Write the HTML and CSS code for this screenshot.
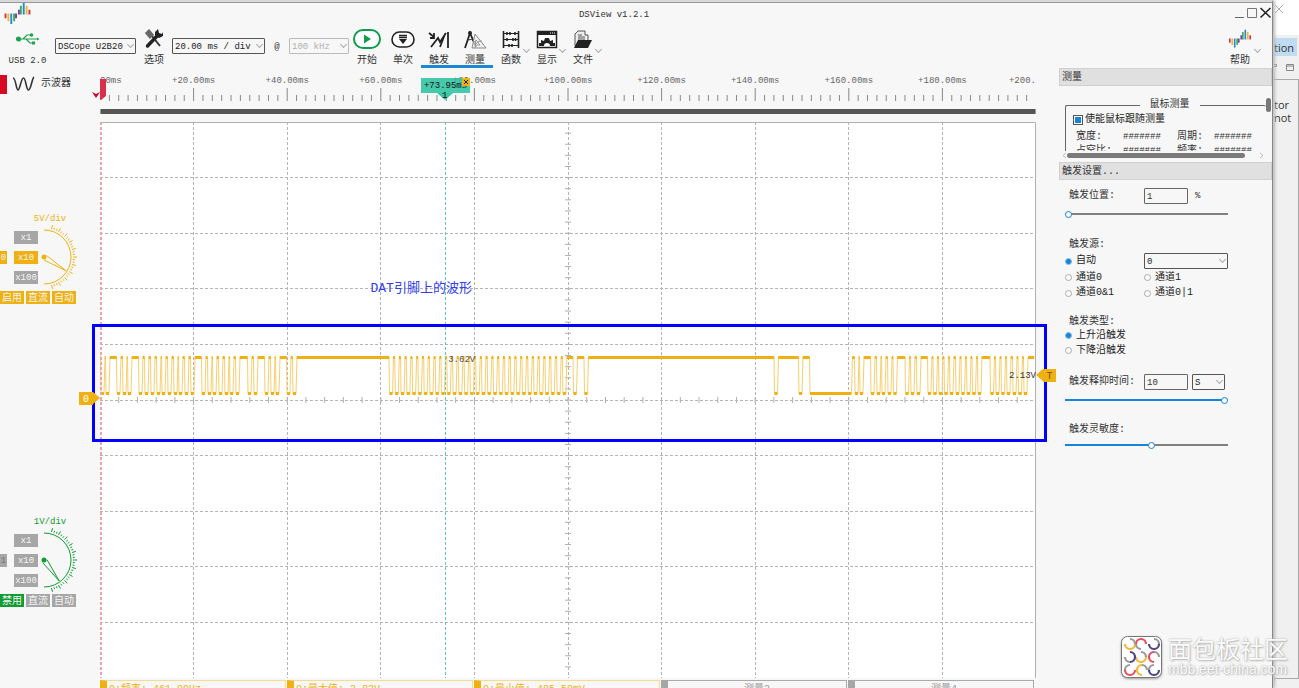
FILE: index.html
```html
<!DOCTYPE html>
<html lang="zh-CN">
<head>
<meta charset="utf-8">
<title>DSView v1.2.1</title>
<link rel="stylesheet" href="styles.css">
</head>
<body>
<svg class="defs" aria-hidden="true">
  <symbol id="bars" viewBox="0 0 27 23">
    <path fill="#d6304a" d="M0 11h2v5h-2zM25 7h2v5h-2z"/>
    <path fill="#f2b632" d="M3 11h2v8h-2zM22 3h2v9h-2z"/>
    <path fill="#2389dc" d="M6 11h2v11h-2zM19 0h2v12h-2z"/>
    <path fill="#3faa55" d="M9 11h2v8h-2zM16 3h2v9h-2z"/>
    <path fill="#7a3fa0" d="M11 11h2v5h-2zM14 7h2v5h-2z"/>
  </symbol>
</svg>
<div class="desktop">
  <div class="app">
    <header class="titlebar">
      <svg class="logo" width="27" height="22"><use href="#bars"/></svg>
      <h1>DSView v1.2.1</h1>
      <div class="window-buttons">
        <button aria-label="最小化"><svg width="11" height="13"><path d="M1 11.5h9" stroke="#666"/></svg></button>
        <button aria-label="最大化"><svg width="12" height="13"><path d="M1.500 2.500h9v9h-9z" fill="none" stroke="#777"/></svg></button>
        <button aria-label="关闭"><svg width="13" height="13"><path d="M1.500 2l10 9.500M11.500 2l-10 9.500" stroke="#222" stroke-width="1.600"/></svg></button>
      </div>
    </header>

    <nav class="toolbar">
      <button class="tool usb">
        <svg width="24" height="22" fill="none" stroke="#1aa34f" stroke-width="1.200"><circle cx="2.500" cy="11" r="2" fill="#1aa34f"/><path d="M3 11h18M7 11l4-4h4M10 11l4 4h3"/><circle cx="15.500" cy="7" r="1.200" fill="#1aa34f"/><path d="M16 13.500h3v3h-3zM21 9.500l2.500 1.500-2.500 1.500z" fill="#1aa34f" stroke="none"/></svg>
        <span class="latin">USB 2.0</span>
      </button>
      <span class="combo combo-device"><select aria-label="设备"><option>DSCope U2B20</option></select></span>
      <button class="tool">
        <svg width="20" height="22"><path d="M4 3l12 15" stroke="#333" stroke-width="2"/><path d="M2 4l5 6M4 2l5 6" stroke="#666" stroke-width="3"/><path d="M3.500 18L14 7" stroke="#222" stroke-width="3.500" stroke-linecap="round"/><path d="M11 8V4l3-3 1 4 3 1 1-2v4l-4 2z" fill="#222"/></svg>
        <span>选项</span>
      </button>
      <span class="combo combo-time"><select aria-label="时基"><option>20.00 ms / div</option></select></span>
      <span class="at latin">@</span>
      <span class="combo combo-rate off"><select aria-label="采样率" disabled><option>100 kHz</option></select></span>
      <button class="tool">
        <svg width="28" height="22"><rect x="1" y="2" width="26" height="18" rx="9" fill="#fff" stroke="#109c4c" stroke-width="2"/><path d="M11 6.500v9l7-4.500z" fill="#109c4c"/></svg>
        <span>开始</span>
      </button>
      <button class="tool">
        <svg width="24" height="22"><rect x="1" y="4" width="22" height="15" rx="7.500" fill="#fff" stroke="#222" stroke-width="1.600"/><path d="M8 7.500h8M8 9.500h8" stroke="#222" stroke-width="1.500"/><path d="M8 11h8l-4 5z" fill="#222"/></svg>
        <span>单次</span>
      </button>
      <button class="tool active">
        <svg width="22" height="22"><path d="M1 5l5 4M6 5v5H2M20 4v16" fill="none" stroke="#222" stroke-width="1.800"/><path d="M3 19L10 10l2 4 6-9M12 19l5-13" fill="none" stroke="#222" stroke-width="1.800"/></svg>
        <span>触发</span>
      </button>
      <button class="tool active">
        <svg width="24" height="22"><path d="M2 20L7 5l6 14" fill="none" stroke="#222" stroke-width="1.800"/><circle cx="7" cy="5" r="2" fill="#222"/><path d="M4 12q5-2 8 2" fill="none" stroke="#333"/><path d="M9 20L12 6l11 14z" fill="#eee" fill-opacity=".7" stroke="#888"/><path d="M12 17l1-5 4 5zM12 20q0-7 7-7" fill="none" stroke="#999"/></svg>
        <span>测量</span>
      </button>
      <button class="tool menu">
        <svg width="20" height="22" stroke="#222" fill="none"><path d="M2.500 3v17M17.500 3v17" stroke-width="1.600"/><path d="M3 5.500h14M3 11.500h14M3 17.500h14"/><path d="M6 4v3M9 4v3M12 10v3M14.500 10v3M6 10v3M8 16v3M11 16v3M14 4v3" stroke-width="1.600"/></svg>
        <span>函数</span>
      </button>
      <button class="tool menu">
        <svg width="22" height="22"><path d="M1.500 3.500h19v16h-19z" fill="#fff" stroke="#222" stroke-width="1.500"/><path d="M1 3h20v4H1z" fill="#222"/><path d="M14 5h1M16 5h1M18 5h1" stroke="#fff"/><path d="M3 18v-3h2l0-3 3 1 1-3h4l1 3 3-1v3h2v3h-5q0-3-3-3t-3 3z" fill="#222"/></svg>
        <span>显示</span>
      </button>
      <button class="tool menu">
        <svg width="22" height="22"><path d="M3 18V6l3-3h7v4h3v5" fill="#eee" stroke="#555"/><path d="M6 7h4M6 9h7M6 11h7" stroke="#555"/><path d="M2 20l4-8h14l-4 8z" fill="#222"/></svg>
        <span>文件</span>
      </button>
      <span class="spacer"></span>
      <button class="tool menu help">
        <svg width="22" height="22"><use href="#bars"/></svg>
        <span>帮助</span>
      </button>
    </nav>

    <main class="work">
      <aside class="gutter">
        <div class="mode"><i class="mode-tag"></i>
          <svg width="24" height="16"><path d="M1 2C4 2 4 14 6 14S9 2 11.500 2 14 14 16.500 14 20 2 22 1" fill="none" stroke="#333" stroke-width="1.600"/></svg>
          <span>示波器</span>
        </div>
        <section class="channel ch0">
          <h2>5V/div</h2>
          <div class="probe">
            <span class="tag">0</span>
            <div class="factors"><button>x1</button><button class="on">x10</button><button>x100</button></div>
            <svg class="dial" width="36" height="64" data-angle="32"></svg>
          </div>
          <div class="switches"><button class="on">启用</button><button class="on">直流</button><button class="on">自动</button></div>
        </section>
        <section class="channel ch1">
          <h2>1V/div</h2>
          <div class="probe">
            <span class="tag">1</span>
            <div class="factors"><button>x1</button><button>x10</button><button>x100</button></div>
            <svg class="dial" width="36" height="64" data-angle="54"></svg>
          </div>
          <div class="switches"><button class="on">禁用</button><button>直流</button><button>自动</button></div>
        </section>
      </aside>

      <section class="scope">
        <div class="ruler">
          <div class="ruler-labels latin"><span>00ms</span><span>+20.00ms</span><span>+40.00ms</span><span>+60.00ms</span><span>+80.00ms</span><span>+100.00ms</span><span>+120.00ms</span><span>+140.00ms</span><span>+160.00ms</span><span>+180.00ms</span><span>+200.</span></div>
          <svg class="ruler-ticks" id="ticks" viewBox="0 0 936 14" preserveAspectRatio="none"></svg>
          <div class="overview"></div>
          <svg class="origin" width="15" height="24"><path d="M8 3h6v17l-5 4h-1z" fill="#d6304a"/><path d="M0 16l4 2 4-2-4 6z" fill="#d6001c"/></svg>
          <div class="cursor latin"><span>+73.95ms</span><button class="cursor-close" aria-label="删除光标"><svg width="8" height="8"><path d="M2 2l4 4M6 2l-4 4" stroke="#222"/></svg></button><b>1</b></div>
        </div>
        <div class="plot">
          <svg class="trace" id="trace" viewBox="0 0 936 556" preserveAspectRatio="none"></svg>
          <p class="note">DAT引脚上的波形</p>
          <div class="highlight"></div>
          <span class="reading latin">3.62V</span>
          <span class="level latin">2.13V</span>
          <span class="flag zero">0</span>
          <span class="flag trig">T</span>
        </div>
        <div class="measures">
          <div class="live">0:频率: 461.00Hz</div><div class="live">0:最大值: 3.82V</div><div class="live">0:最小值: 485.50mV</div><div>测量3</div><div>测量4</div>
        </div>
      </section>

      <aside class="docks">
        <section>
          <h2 class="dock-title">测量</h2>
          <div class="dock-scroll">
            <fieldset class="mouse">
              <legend>鼠标测量</legend>
              <label class="check"><input type="checkbox" checked>使能鼠标跟随测量</label>
              <dl><dt>宽度:</dt><dd>#######</dd><dt>周期:</dt><dd>#######</dd><dt>占空比:</dt><dd>#######</dd><dt>频率:</dt><dd>#######</dd></dl>
            </fieldset>
            <div class="vbar"><i></i></div>
          </div>
          <div class="hbar">
            <svg width="5" height="7"><path d="M4 1L1 3.500 4 6" fill="none" stroke="#bbb"/></svg>
            <i></i>
            <svg width="5" height="7"><path d="M1 1l3 2.500L1 6" fill="none" stroke="#bbb"/></svg>
          </div>
        </section>
        <section>
          <h2 class="dock-title">触发设置...</h2>
          <form class="trigger">
            <div class="row"><label for="pos">触发位置:</label><input class="field" id="pos" value="1"><span class="latin">%</span></div>
            <input class="slider" type="range" aria-label="触发位置" min="0" max="100" value="0" style="--fill:0%">
            <h3 class="source-title">触发源:</h3>
            <div class="sources">
              <label class="pick"><input type="radio" name="src" checked>自动</label>
              <span class="combo combo-source"><select aria-label="通道"><option>0</option></select></span>
              <label class="pick"><input type="radio" name="src">通道0</label>
              <label class="pick"><input type="radio" name="src">通道1</label>
              <label class="pick"><input type="radio" name="src">通道0&amp;1</label>
              <label class="pick"><input type="radio" name="src">通道0|1</label>
            </div>
            <h3 class="type-title">触发类型:</h3>
            <label class="pick"><input type="radio" name="edge" checked>上升沿触发</label>
            <label class="pick"><input type="radio" name="edge">下降沿触发</label>
            <div class="row holdoff"><label for="hold">触发释抑时间:</label><input class="field" id="hold" value="10"><span class="combo combo-unit"><select aria-label="单位"><option>S</option></select></span></div>
            <input class="slider" type="range" aria-label="触发释抑时间" min="0" max="100" value="100" style="--fill:100%">
            <h3 class="sense-title"><label for="sense">触发灵敏度:</label></h3>
            <input class="slider" id="sense" type="range" min="0" max="100" value="53" style="--fill:53%">
          </form>
        </section>
      </aside>
    </main>
  </div>

  <div class="behind">
    <div class="behind-top"><svg width="10" height="10"><path d="M1 1l8 8M9 1l-8 8" stroke="#aaa"/></svg></div>
    <div class="behind-tab">tion</div>
    <div class="behind-tools"><svg width="25" height="10" fill="none" stroke="#888"><path d="M0 2.500h2.500v2H0M12.500 2.500h7v6h-7zM12 4h8"/></svg></div>
    <div class="behind-page"><span>tor</span><span>not</span></div>
  </div>

  <div class="watermark">
    <svg width="41" height="42" viewBox="0 0 41 42" fill="none" stroke-width="2.200"><rect x=".5" y=".5" width="40" height="41" rx="6" fill="#fff" stroke="#777" stroke-width="1"/>
      <path stroke="#f5b731" d="M4 8a5 5 0 0 0 10 0M15 21a5 5 0 0 0 10 0M21 29a5 5 0 0 0 0 10"/>
      <path stroke="#e84a5f" d="M15 8a5 5 0 0 1 10 0M33 16a5 5 0 0 0 0 10M4 34a5 5 0 0 0 10 0"/>
      <path stroke="#4a4585" d="M28 8a5 5 0 0 0 10 0M9 16a5 5 0 0 1 0 10M28 34a5 5 0 0 0 10 0"/>
      <path stroke="#999" d="M9 3a5 5 0 0 1 5 5M33 3a5 5 0 0 1 5 5M15 8a5 5 0 0 0 5 5M9 26a5 5 0 0 1-5-5M20 16a5 5 0 0 1 5 5M33 16a5 5 0 0 1 5 5M9 29a5 5 0 0 0-5 5M21 29a5 5 0 0 1 5 5M28 34a5 5 0 0 1 5-5"/></svg>
    <div><strong>面包板社区</strong><span>mbb.eet-china.com</span></div>
  </div>
</div>
<script src="app.js"></script>
</body>
</html>
```

FILE: styles.css
```css
* { box-sizing: border-box; }
body, h1, h2, h3, p, dl, dd, fieldset { margin: 0; }
body {
  overflow: hidden;
  color: #333;
  font: 10px/14px "Liberation Mono", "Noto Sans CJK SC", monospace;
}
button, input, select { margin: 0; padding: 0; border: 0; background: none; color: inherit; font: inherit; }
h1, h2, h3 { font-size: 10px; font-weight: 400; }
svg { display: block; flex: none; }
.defs { position: absolute; width: 0; height: 0; }
.latin { font-size: 9px; }
.desktop { position: relative; display: flex; height: 100vh; background: #f0f0f0; }
.app {
  position: relative;
  z-index: 1;
  flex: 1;
  min-width: 0;
  display: flex;
  flex-direction: column;
  border-top: 2px solid #d8d8d8;
  border-right: 1px solid #888;
  background: #f7f7f7;
  box-shadow: 2px 0 3px #bbb;
}
.titlebar {
  display: grid;
  grid-template-columns: 1fr auto 1fr;
  align-items: start;
  height: 26px;
  padding-left: 4px;
  border-top: 1px solid #999;
}
.titlebar h1 { margin-right: 48px; padding-top: 5px; font-size: 9px; }
.window-buttons { display: flex; justify-content: flex-end; gap: 1px; padding-top: 3px; }

.toolbar { display: flex; align-items: flex-start; height: 40px; }
.tool {
  display: flex;
  flex-direction: column;
  align-items: center;
  justify-content: flex-start;
  position: relative;
  width: 36px;
  height: 40px;
}
.tool span { margin-top: 2px; line-height: 16px; padding-top: 1px; height: 16px; }
.tool.active { box-shadow: inset 0 -3px #1b87d6; }
.tool.usb { width: 55px; }
.tool.menu::after {
  content: "";
  position: absolute;
  right: 0;
  top: 19px;
  width: 4px;
  height: 4px;
  border: solid #aaa;
  border-width: 0 1px 1px 0;
  transform: rotate(45deg);
}
.tool.help { width: 40px; margin-right: 12px; }
.spacer { flex: 1; }
.at { width: 24px; padding-top: 12px; text-align: center; }
.combo { position: relative; display: block; height: 16px; }
.toolbar .combo { margin-top: 10px; }
.combo select {
  width: 100%;
  height: 16px;
  padding: 1px 2px 0;
  appearance: none;
  border: 1px solid #555;
  border-radius: 1px;
  color: #222;
  font-size: 9px;
}
.combo::after {
  content: "";
  position: absolute;
  right: 3px;
  top: 4px;
  width: 4px;
  height: 4px;
  border: solid #aaa;
  border-width: 0 1px 1px 0;
  transform: rotate(45deg);
}
.combo.off select { border-color: #bbb; color: #b0b0b0; opacity: 1; }
.combo-device { width: 81px; }
.combo-time { width: 93px; }
.combo-rate { width: 60px; }

.work { flex: 1; min-height: 0; display: flex; }
.gutter { width: 100px; flex: none; }
.mode { display: flex; align-items: center; gap: 5px; height: 32px; }
.mode-tag { width: 7px; height: 19px; background: #d60a25; }
.channel { --hue: #efb111; margin-top: 112px; }
.channel + .channel { margin-top: 211px; }
.ch1 { --hue: #109c30; }
.channel h2 { width: 100px; color: var(--hue); text-align: center; font-size: 9px; line-height: 14px; height: 12px; }
.probe { display: flex; align-items: center; height: 66px; }
.channel button, .tag { height: 13px; background: #a6a6a6; color: #f4f4f4; font-size: 9px; line-height: 15px; text-align: center; }
.tag { width: 7px; margin-right: 7px; }
.ch0 .tag { background: var(--hue); }
.ch1 .tag { color: #777; }
.factors { display: flex; flex-direction: column; gap: 7px; width: 24px; }
.channel button.on { background: var(--hue); }
.dial { margin-left: 2px; overflow: visible; }
.switches { display: flex; gap: 2px; padding-top: 1px; }
.channel .switches button { width: 24px; font-size: 10px; }

.scope { flex: 1; min-width: 0; display: flex; flex-direction: column; margin-right: 23px; }
.ruler { position: relative; height: 54px; color: #666; }
.ruler-labels { display: grid; grid-template-columns: 1fr repeat(9, 2fr) 1fr; height: 20px; padding-top: 6px; text-align: center; }
.ruler-labels span:first-child { text-align: left; }
.ruler-labels span:last-child { text-align: right; }
.ruler-ticks { width: 100%; height: 14px; }
.overview { height: 5px; margin-top: 7px; background: #555; box-shadow: inset 1px 0 #999, inset -1px 0 #999; }
.origin { position: absolute; left: -8px; top: 8px; }
.cursor {
  position: absolute;
  left: 34.300%;
  top: 10px;
  width: 49px;
  height: 15px;
  background: rgba(40, 193, 158, .85);
  color: #111;
  line-height: 17px;
  text-align: center;
}
.cursor::after {
  content: "";
  position: absolute;
  left: 16px;
  top: 15px;
  border: solid transparent;
  border-width: 7px 8px 0;
  border-top-color: #3cc4a5;
}
.cursor b { position: absolute; z-index: 1; left: 21px; top: 10px; font-weight: 400; }
.cursor-close { position: absolute; right: 0; top: 0; width: 8px; height: 8px; background: #efb111; }

.plot { position: relative; flex: 1; min-height: 0; }
.trace { width: 100%; height: 100%; background: #fff; }
.trace path, .ruler-ticks path { fill: none; vector-effect: non-scaling-stroke; }
.grid { stroke: #b4b4b4; stroke-dasharray: 3 2; }
.frame, .grid-ticks { stroke: #b0b0b0; }
.start { stroke: #eba3ad; stroke-width: 2; stroke-dasharray: 3 2; }
.cursor-line { stroke: #5cc9b0; stroke-dasharray: 3 2; }
.edges { stroke: #f6cf70; }
.steady { stroke: #efb111; stroke-width: 3; }
.tick { stroke: #888; }
.note { position: absolute; left: 28.900%; top: 28.500%; color: #3040f0; font-size: 13px; line-height: 17px; white-space: nowrap; }
.highlight { position: absolute; left: -8px; right: -11px; top: 36.300%; height: 21.200%; border: 3px solid #00f; }
.reading { position: absolute; left: 37.200%; top: 41.500%; color: #555; }
.level { position: absolute; right: 0; top: 44.500%; }
.flag { position: absolute; height: 13px; background: #efb111; line-height: 15px; text-align: center; }
.flag::after { content: ""; position: absolute; top: 0; border: solid transparent; }
.zero { left: -21px; top: 48.600%; width: 14px; color: #fff; }
.zero::after { left: 14px; border-width: 6px 0 6px 7px; border-left-color: #efb111; }
.trig { right: -20px; top: 44.400%; width: 13px; color: #7a4d00; }
.trig::after { right: 13px; border-width: 6px 7px 6px 0; border-right-color: #efb111; }
.measures { display: grid; grid-template-columns: repeat(5, 1fr); gap: 1px; height: 10px; padding: 2px 2px 0 0; overflow: hidden; }
.measures div { height: 20px; padding-top: 2px; border: 1px solid #aaa; border-left: 7px solid #a6a6a6; color: #999; text-align: center; }
.measures .live { border-color: #f6dc8e; border-left-color: #efb111; color: #efb111; padding-left: 2px; text-align: left; }

.docks { flex: none; width: 213px; }
.dock-title { height: 18px; padding-left: 2px; border: 1px solid #d0d0d0; background: #e0e0e0; line-height: 18px; }
.dock-scroll { display: flex; height: 65px; padding: 12px 0 0 6px; overflow: hidden; }
.mouse { flex: 1; min-width: 0; height: 90px; padding: 0 0 0 7px; border: 1px solid #666; border-right: 0; border-radius: 2px; }
.mouse legend { margin: 0 auto; padding: 0 10px; white-space: nowrap; }
.check, .pick { display: flex; align-items: center; color: #222; }
.check { gap: 2px; height: 15px; }
.check input { width: 10px; height: 10px; appearance: none; border: 1px solid #555; background: #1685d8; box-shadow: inset 0 0 0 1px #fff; }
.mouse dl { display: grid; grid-template-columns: 47px 54px 37px 40px; padding: 3px 0 0 3px; }
.mouse dd { font-size: 9px; }
.vbar { flex: none; width: 6px; }
.vbar i { display: block; width: 5px; height: 14px; border-radius: 3px; background: #777; }
.hbar { display: flex; align-items: center; gap: 0; height: 11px; padding: 0 8px 2px 3px; }
.hbar i { width: 178px; height: 5px; margin-right: auto; border-radius: 3px; background: #7a7a7a; }
.trigger { padding: 7px 44px 0 6px; }
.row { display: grid; grid-template-columns: 75px 44px auto 1fr; align-items: center; height: 18px; padding-left: 4px; }
.row .latin { padding-left: 7px; }
.field { width: 44px; height: 16px; padding: 1px 2px 0; border: 1px solid #666; border-radius: 1px; font-size: 9px; }
.combo-unit { width: 33px; margin-left: 4px; }
.slider { display: block; width: 100%; height: 8px; margin-top: 5px; appearance: none; background: linear-gradient(#1685d8, #1685d8) 0 3px / var(--fill) 2px no-repeat, linear-gradient(#808080, #808080) 0 3px / 100% 2px no-repeat; }
.slider::-webkit-slider-thumb { width: 7px; height: 7px; appearance: none; border: 1px solid #1685d8; border-radius: 50%; background: #fff; }
.trigger h3 { padding-left: 4px; }
.source-title { margin-top: 20px; }
.sources { display: grid; grid-template-columns: 79px 1fr; grid-template-rows: 18px 15px 16px; align-items: center; }
.pick { gap: 4px; height: 15px; }
.pick input { width: 7px; height: 7px; appearance: none; border: 1px solid #aaa; border-radius: 50%; background: #fff; }
.pick input:checked { border-color: #8abce0; background: #1685d8; }
.type-title { margin-top: 15px; line-height: 12px; }
.holdoff { margin-top: 15px; }
.sense-title { margin-top: 19px; }
.sense-title + .slider { margin-top: 4px; }

.behind { width: 26px; flex: none; display: flex; flex-direction: column; padding-left: 1px; color: #333; font: 11px/14px "Open Sans", sans-serif; }
.behind-top { height: 35px; padding: 4px 0 0; background: #fff; }
.behind-tab { height: 18px; margin: 3px 2px 0 0; background: #bfdcf3; line-height: 20px; }
.behind-tools { height: 24px; padding-top: 6px; border-bottom: 1px solid #aaa; }
.behind-page { flex: 1; margin-bottom: 9px; padding-top: 18px; border: solid #aaa; border-width: 0 1px 1px 0; line-height: 13px; }
.behind-page span { display: block; }
.watermark { position: absolute; z-index: 2; right: 9px; bottom: 10px; display: flex; align-items: center; gap: 6px; color: #fafafa; text-shadow: 0 0 2px #aaa, 1px 1px 2px #bbb; }
.watermark svg { filter: drop-shadow(0 1px 1px #999); }
.watermark strong, .watermark span { display: block; white-space: nowrap; }
.watermark strong { width: 122px; font: 400 24px/26px "Noto Sans CJK SC", sans-serif; }
.watermark span { font: 14px/17px "Liberation Sans", sans-serif; }
```

FILE: app.js
```js
const NS = "http://www.w3.org/2000/svg";

function path(svg, d, cls) {
  const el = document.createElementNS(NS, "path");
  el.setAttribute("d", d);
  el.setAttribute("class", cls);
  svg.append(el);
  return el;
}

// Time ruler: ten minor ticks per division.
let minor = "";
for (let i = 1; i < 100; i++) {
  minor += `M${i * 9.36} ${i % 10 ? 7 : 0}V13`;
}
path(document.getElementById("ticks"), minor, "tick");

// Graticule: 10 x 10 divisions, with fine marks on both centre axes.
const W = 936, H = 556;
const trace = document.getElementById("trace");
let grid = "", marks = "";
for (let i = 1; i < 10; i++) {
  grid += `M${Math.floor(i * W / 10) + .5} 0V${H}M0 ${Math.floor(i * H / 10) + .5}H${W}`;
}
for (let i = 1; i < 50; i++) {
  marks += `M${i * W / 50} 275V281M465 ${i * H / 50}h6`;
}
path(trace, grid, "grid");
path(trace, marks, "grid-ticks");
path(trace, `M0 .5H${W - .5}V${H}`, "frame");

// Low intervals of the DAT signal.
const lows = [];
const add = (starts, width) => starts.forEach(s => lows.push([s, s + width]));
add([1, 6, 17, 23, 28, 39, 45, 51, 57, 62, 68, 74, 79, 85, 91, 102, 108, 113, 119, 125, 130, 136, 148, 154, 165, 171, 176, 187, 193], 3);
add(Array.from({ length: 31 }, (_, i) => 289.5 + i * 5.78), 3);
add([473.5, 484.5, 674.5, 699], 3);
lows.push([710, 751.5]);
add([755, 760, 771, 777, 782, 788, 793.5, 805.5, 811, 817, 828, 833.5, 839, 844.5, 850, 856, 861.5, 867, 872.5, 878, 890.5, 896, 901.5, 907, 913, 918.5, 924], 3);

const HI = 235.5, LO = 271.5;
let edges = `M0 ${HI}`, steady = "", x = 0;
for (const [a, b] of lows) {
  edges += `L${a - .5} ${HI}L${a} ${LO}H${b}L${b + 1} ${HI}`;
  if (a - .5 > x) steady += `M${x - .3} ${HI}H${a - .3}`;
  steady += `M${a} ${LO}H${b}`;
  x = b + 1;
}
steady += `M${x} ${HI}H934`;
path(trace, edges, "edges");
path(trace, steady, "steady");
path(trace, `M1 0V${H}`, "start");
path(trace, `M345.500 0V${H}`, "cursor-line");

// Volts-per-division dials.
for (const dial of document.querySelectorAll(".dial")) {
  const cx = 4, cy = 32, color = "var(--hue)";
  const at = (r, deg) => [cx + r * Math.cos(deg * Math.PI / 180), cy + r * Math.sin(deg * Math.PI / 180)];
  let d = "M4 5A27 27 0 0 1 4 59";
  for (let a = -75; a <= 75; a += 5) {
    d += `M${at(29, a)}L${at(a % 15 ? 31 : 33, a)}`;
  }
  const angle = +dial.dataset.angle;
  d += `M${at(3, angle - 60)}L${at(26, angle)}L${at(3, angle + 60)}`;
  const ring = path(dial, d, "ring");
  ring.style.cssText = `fill:none;stroke:${color}`;
  const hub = path(dial, `M${cx - 2.5} ${cy}a2.500 2.500 0 1 0 5 0a2.500 2.500 0 1 0 -5 0`, "hub");
  hub.style.fill = color;
}
```
